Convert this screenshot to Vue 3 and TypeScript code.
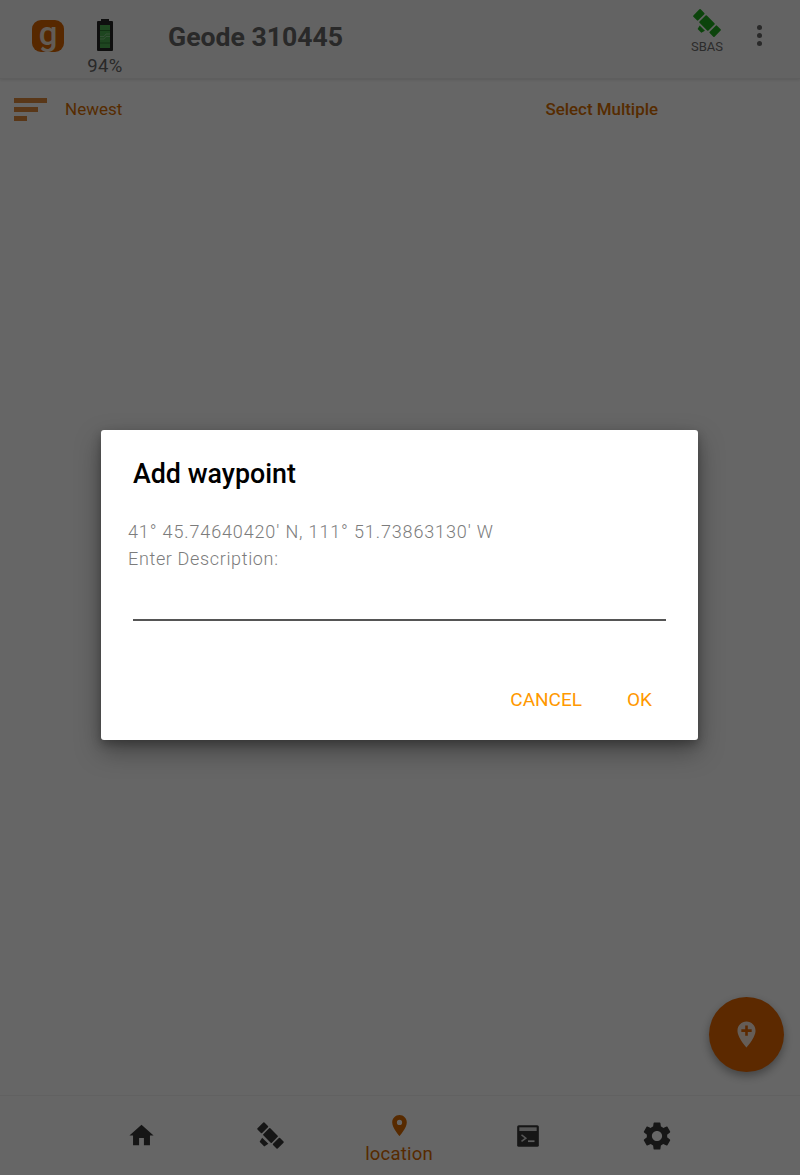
<template>
  <div class="page">
    <header class="top-bar">
      <div class="logo"><span>g</span></div>
      <div class="battery">
        <svg width="16" height="32" viewBox="0 0 16 32">
          <rect x="4" y="0" width="8" height="3" fill="#262626" />
          <rect x="0" y="2" width="16" height="30" rx="1" fill="#262626" />
          <rect x="3" y="6" width="10" height="23" fill="#4caf50" />
          <path d="M3 17.5 H7 L9 15 H13 M3 20 H7 L9 17.5 H13" stroke="#a5d6a7" stroke-width="0.6" fill="none" />
          <path d="M3 11.5 H13 M3 24 H13" stroke="#2e7d32" stroke-width="1" />
        </svg>
        <span>94%</span>
      </div>
      <h1 class="title">Geode 310445</h1>
      <div class="sbas">
        <svg width="30" height="30" viewBox="0 0 26 26" fill="#1faa1f">
          <g transform="rotate(-45 13 13)">
            <rect x="8.5" y="0" width="9" height="6" rx="0.8" />
            <rect x="8.5" y="7.5" width="9" height="11" rx="0.8" />
            <rect x="8.5" y="20" width="9" height="6" rx="0.8" />
            <path d="M3.5 11 L7 10 V16.5 L3.5 15.5 Z" />
          </g>
        </svg>
        <span>SBAS</span>
      </div>
      <div class="more">
        <i></i><i></i><i></i>
      </div>
    </header>

    <div class="sort-row">
      <div class="sort">
        <div class="sort-icon"><i class="l1"></i><i class="l2"></i><i class="l3"></i></div>
        <span>Newest</span>
      </div>
      <span class="select">Select Multiple</span>
    </div>

    <main class="list"></main>

    <nav class="bottom-nav">
      <div v-for="item in navItems" :key="item.name" class="nav-item" :class="{ active: item.active }">
        <svg :width="item.size" :height="item.size" viewBox="0 0 24 24" fill="currentColor">
          <g v-if="item.name === 'satellite'" transform="rotate(-45 12 12)">
            <rect x="8.4" y="1.6" width="7.2" height="4.8" rx="0.6" />
            <rect x="8.4" y="7.6" width="7.2" height="8.8" rx="0.6" />
            <rect x="8.4" y="17.6" width="7.2" height="4.8" rx="0.6" />
            <path d="M3.2 9.6 L6.6 8.8 V15.2 L3.2 14.4 Z" />
          </g>
          <g v-else-if="item.name === 'terminal'">
            <rect x="2" y="2" width="20" height="20" rx="1.5" />
            <rect x="4" y="4" width="16" height="3.4" fill="#d8d8d8" />
            <path d="M6 11 L10 14 L6 17" fill="none" stroke="#d8d8d8" stroke-width="1.4" />
            <rect x="12" y="16" width="6" height="1.6" fill="#e8e8e8" />
          </g>
          <path v-else :d="item.path" />
        </svg>
        <span v-if="item.active">{{ item.name }}</span>
      </div>
    </nav>

    <button class="fab" type="button">
      <svg width="31" height="31" viewBox="0 0 24 24">
        <path fill="#ffffff" fill-opacity="0.85" d="M12 2C8.14 2 5 5.14 5 9c0 5.25 7 13 7 13s7-7.75 7-13c0-3.86-3.14-7-7-7zm4 8h-3v3h-2v-3H8V8h3V5h2v3h3v2z" />
      </svg>
    </button>

    <div class="scrim">
      <div class="dialog">
        <h2>Add waypoint</h2>
        <p><span class="coords">{{ coords }}</span><br><span class="prompt">Enter Description:</span></p>
        <input v-model.trim="description" type="text" class="desc-input">
        <div class="actions">
          <button type="button">CANCEL</button>
          <button type="button">OK</button>
        </div>
      </div>
    </div>
  </div>
</template>

<script setup lang="ts">
import { ref } from 'vue'

interface NavItem {
  name: string
  path: string
  size: number
  active?: boolean
}

const coords = "41° 45.74640420' N, 111° 51.73863130' W"
const description = ref('')

const navItems: NavItem[] = [
  { name: 'home', size: 29, path: 'M10 20v-6h4v6h5v-8h3L12 3 2 12h3v8z' },
  { name: 'satellite', size: 33, path: '' },
  {
    name: 'location',
    active: true,
    size: 25,
    path: 'M12 2C8.13 2 5 5.13 5 9c0 5.25 7 13 7 13s7-7.75 7-13c0-3.87-3.13-7-7-7zm0 9.5a2.5 2.5 0 0 1 0-5 2.5 2.5 0 0 1 0 5z',
  },
  { name: 'terminal', size: 26, path: '' },
  {
    name: 'settings',
    size: 34,
    path: 'M19.14 12.94c.04-.3.06-.61.06-.94 0-.32-.02-.64-.07-.94l2.03-1.58c.18-.14.23-.41.12-.61l-1.92-3.32c-.12-.22-.37-.29-.59-.22l-2.39.96c-.5-.38-1.03-.7-1.62-.94l-.36-2.54c-.04-.24-.24-.41-.48-.41h-3.84c-.24 0-.43.17-.47.41l-.36 2.54c-.59.24-1.13.57-1.62.94l-2.39-.96c-.22-.08-.47 0-.59.22L2.74 8.87c-.12.21-.08.47.12.61l2.03 1.58c-.05.3-.09.63-.09.94s.02.64.07.94l-2.03 1.58c-.18.14-.23.41-.12.61l1.92 3.32c.12.22.37.29.59.22l2.39-.96c.5.38 1.03.7 1.62.94l.36 2.54c.05.24.24.41.48.41h3.84c.24 0 .44-.17.47-.41l.36-2.54c.59-.24 1.13-.56 1.62-.94l2.39.96c.22.08.47 0 .59-.22l1.92-3.32c.12-.22.07-.47-.12-.61l-2.01-1.58zM12 15.6c-1.98 0-3.6-1.62-3.6-3.6s1.62-3.6 3.6-3.6 3.6 1.62 3.6 3.6-1.62 3.6-3.6 3.6z',
  },
]
</script>

<style>
html, body {
  margin: 0;
  background: #fff;
}
</style>

<style scoped>
.page {
  position: relative;
  width: 800px;
  height: 1175px;
  display: flex;
  flex-direction: column;
  overflow: hidden;
  background: #ffffff;
  font-family: Roboto, "Liberation Sans", sans-serif;
}

.top-bar {
  height: 78px;
  flex: none;
  display: flex;
  align-items: flex-start;
  padding-left: 32px;
  background: #f8f8f8;
  border-bottom: 1px solid #ececec;
  box-shadow: 0 1px 3px rgba(0, 0, 0, 0.12);
}

.logo {
  width: 32px;
  height: 32px;
  margin-top: 20px;
  border-radius: 9px;
  background: #d96400;
  display: flex;
  justify-content: center;
  color: #f6e6d6;
  font-weight: 500;
  font-size: 33px;
  line-height: 27px;
}

.battery {
  width: 50px;
  margin-left: 16px;
  margin-top: 19px;
  display: flex;
  flex-direction: column;
  align-items: center;
  font-size: 18.5px;
  line-height: 21px;
  color: #666666;
  letter-spacing: 0.4px;
}

.battery span {
  margin-top: 5px;
}

.title {
  margin: 0 0 0 38px;
  padding-top: 20px;
  font-size: 26.6px;
  line-height: 33px;
  font-weight: 700;
  color: #666666;
  flex: 1;
}

.sbas {
  width: 44px;
  margin-top: 8px;
  display: flex;
  flex-direction: column;
  align-items: center;
  font-size: 13px;
  line-height: 14px;
  color: #6e6e6e;
}

.sbas span {
  margin-top: 2px;
}

.more {
  width: 8px;
  margin: 25px 36px 0 27px;
  display: flex;
  flex-direction: column;
  gap: 3px;
}

.more i {
  width: 5px;
  height: 5px;
  margin-left: 1px;
  border-radius: 50%;
  background: #666666;
}

.sort-row {
  height: 60px;
  flex: none;
  display: flex;
  align-items: flex-start;
  justify-content: space-between;
  padding: 18px 142px 0 14px;
  font-size: 17px;
  line-height: 24px;
  color: #d86e00;
}

.sort {
  display: flex;
  align-items: center;
  gap: 18px;
}

.sort-icon {
  width: 33px;
  display: flex;
  flex-direction: column;
  gap: 4px;
}

.sort-icon i {
  height: 5px;
  background: #de8a3c;
}

.l1 { width: 33px; }
.l2 { width: 24px; }
.l3 { width: 13px; }

.select {
  font-weight: 500;
  font-size: 16.9px;
}

.list {
  flex: 1;
}

.bottom-nav {
  height: 79px;
  flex: none;
  display: flex;
  justify-content: center;
  padding-right: 2px;
  background: #ffffff;
  border-top: 1px solid #f2f2f2;
}

.nav-item {
  width: 129px;
  display: flex;
  flex-direction: column;
  align-items: center;
  justify-content: center;
  color: #383838;
}

.nav-item.active {
  color: #d96a00;
  justify-content: flex-start;
}

.nav-item.active svg {
  margin-top: 17px;
}

.nav-item.active span {
  font-size: 18.5px;
  line-height: 22px;
  margin-top: 5px;
  letter-spacing: 0.2px;
}

.fab {
  position: absolute;
  left: 709px;
  top: 997px;
  width: 75px;
  height: 75px;
  padding: 0;
  border: none;
  border-radius: 50%;
  background: #e66600;
  display: flex;
  align-items: center;
  justify-content: center;
  box-shadow: 0 4px 10px rgba(0, 0, 0, 0.35);
}

.scrim {
  position: absolute;
  inset: 0;
  background: rgba(0, 0, 0, 0.6);
}

.dialog {
  position: absolute;
  left: 101px;
  top: 430px;
  width: 597px;
  height: 310px;
  box-sizing: border-box;
  padding: 27px 32px 0 27px;
  display: flex;
  flex-direction: column;
  background: #ffffff;
  border-radius: 3px;
  box-shadow: 0 11px 26px rgba(0, 0, 0, 0.35), 0 4px 10px rgba(0, 0, 0, 0.25);
}

.dialog h2 {
  margin: 0 0 0 5px;
  font-size: 26.8px;
  line-height: 34px;
  font-weight: 500;
  color: #000000;
}

.dialog p {
  margin: 27px 0 0;
  font-size: 18px;
  line-height: 27px;
  font-weight: 300;
  color: #7c7c7c;
}

.coords {
  letter-spacing: 0.86px;
}

.prompt {
  letter-spacing: 0.65px;
}

.desc-input {
  display: block;
  width: 533px;
  height: 36px;
  margin: 13px 0 0 5px;
  padding: 0;
  box-sizing: border-box;
  border: none;
  border-bottom: 2px solid #555555;
  outline: none;
  background: transparent;
}

.actions {
  display: flex;
  justify-content: flex-end;
  gap: 45px;
  margin-top: 66px;
  padding-right: 14px;
}

.actions button {
  padding: 0;
  border: none;
  background: transparent;
  font-family: Roboto, "Liberation Sans", sans-serif;
  font-size: 19px;
  line-height: 26px;
  font-weight: 400;
  color: #ff9800;
}
</style>
